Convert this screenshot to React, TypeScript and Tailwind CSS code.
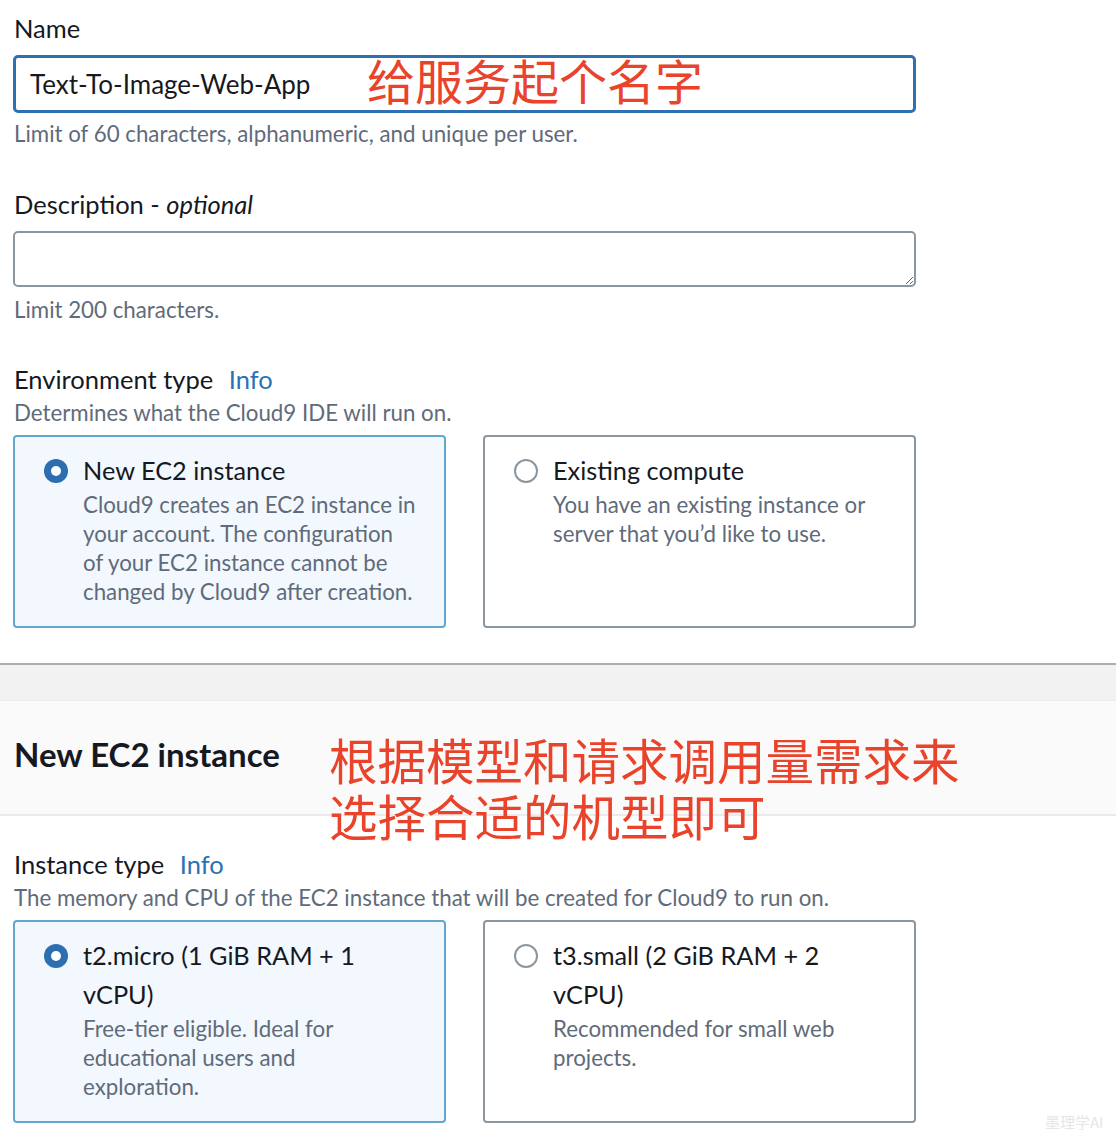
import React from "react";

const Radio = ({ checked }: { checked: boolean }) =>
  checked ? (
    <span className="block w-[24px] h-[24px] rounded-full bg-[#2d6eb0] flex items-center justify-center shrink-0">
      <span className="block w-[10px] h-[10px] rounded-full bg-white" />
    </span>
  ) : (
    <span className="block w-[24px] h-[24px] rounded-full border-2 border-[#8c969f] bg-white shrink-0" />
  );

const Card = ({
  checked,
  title,
  desc,
}: {
  checked: boolean;
  title: string[];
  desc: string[];
}) => (
  <div
    className={
      checked
        ? "border-2 border-[#63a7cf] bg-[#f2f8fd] rounded-[4px] pl-[29px] pr-[20px] pt-[14px] pb-[20px]"
        : "border-2 border-[#8c969f] bg-white rounded-[4px] pl-[29px] pr-[20px] pt-[14px] pb-[20px]"
    }
  >
    <div className="flex items-start">
      <div className="h-[39px] flex items-center">
        <Radio checked={checked} />
      </div>
      <div className="ml-[15px]">
        {title.map((t, i) => (
          <div key={i} className="text-[25.3px] leading-[39px] text-[#16191f] whitespace-nowrap">
            {t}
          </div>
        ))}
        {desc.map((d, i) => (
          <div key={i} className="text-[22.3px] leading-[29px] text-[#5f6b7a] whitespace-nowrap">
            {d}
          </div>
        ))}
      </div>
    </div>
  </div>
);

export default function App() {
  return (
    <div className="relative w-[1116px] h-[1140px] overflow-hidden bg-white font-['Lato','Noto_Sans_CJK_SC',sans-serif]">
      {/* Section 1 */}
      <div className="ml-[13px] w-[903px] pt-[13px]">
        <div className="text-[25.5px] leading-[30px] text-[#16191f] pl-[1px]">Name</div>
        <div className="mt-[12px] h-[58px] border-[3px] border-[#2f70b2] rounded-[5px] flex items-center pl-[14px]">
          <span className="text-[26px] text-[#16191f]">Text-To-Image-Web-App</span>
        </div>
        <div className="mt-[7px] text-[22.3px] leading-[28px] text-[#5f6b7a] pl-[1px]">
          Limit of 60 characters, alphanumeric, and unique per user.
        </div>

        <div className="mt-[41px] text-[25.5px] leading-[30px] text-[#16191f] pl-[1px]">
          Description - <span className="italic">optional</span>
        </div>
        <textarea
          readOnly
          className="mt-[12px] block w-full h-[56px] border-2 border-[#8c969f] rounded-[5px] bg-white outline-none"
        />
        <div className="mt-[9px] text-[22.3px] leading-[28px] text-[#5f6b7a] pl-[1px]">
          Limit 200 characters.
        </div>

        <div className="mt-[40px] text-[25.5px] leading-[30px] text-[#16191f] pl-[1px]">
          Environment type <span className="ml-[9px] text-[#2a71b5]">Info</span>
        </div>
        <div className="mt-[5px] text-[22.3px] leading-[28px] text-[#5f6b7a] pl-[1px]">
          Determines what the Cloud9 IDE will run on.
        </div>
        <div className="mt-[8px] grid grid-cols-2 gap-[37px] h-[193px]">
          <Card
            checked
            title={["New EC2 instance"]}
            desc={[
              "Cloud9 creates an EC2 instance in",
              "your account. The configuration",
              "of your EC2 instance cannot be",
              "changed by Cloud9 after creation.",
            ]}
          />
          <Card
            checked={false}
            title={["Existing compute"]}
            desc={["You have an existing instance or", "server that you\u2019d like to use."]}
          />
        </div>
      </div>

      {/* Divider band */}
      <div className="mt-[35px] border-t-2 border-[#a9aeb3] h-[37px] bg-[#f2f2f2]" />
      <div className="h-[116px] bg-[#fafafa] border-t border-b-2 border-[#ebebeb] flex items-center pl-[14px] pb-[6px]">
        <span className="text-[33px] font-bold text-[#16191f]">New EC2 instance</span>
      </div>

      {/* Section 2 */}
      <div className="ml-[13px] w-[903px] pt-[33px]">
        <div className="text-[25.5px] leading-[30px] text-[#16191f] pl-[1px]">
          Instance type <span className="ml-[9px] text-[#2a71b5]">Info</span>
        </div>
        <div className="mt-[5px] text-[22.3px] leading-[28px] text-[#5f6b7a] pl-[1px]">
          The memory and CPU of the EC2 instance that will be created for Cloud9 to run on.
        </div>
        <div className="mt-[8px] grid grid-cols-2 gap-[37px] h-[202px]">
          <Card
            checked
            title={["t2.micro (1 GiB RAM + 1", "vCPU)"]}
            desc={["Free-tier eligible. Ideal for", "educational users and", "exploration."]}
          />
          <Card
            checked={false}
            title={["t3.small (2 GiB RAM + 2", "vCPU)"]}
            desc={["Recommended for small web", "projects."]}
          />
        </div>
      </div>

      {/* Annotations */}
      <div className="absolute left-[367px] top-[51px] text-[48px] leading-[56px] text-[#e9432b] font-['Noto_Sans_CJK_SC',sans-serif] whitespace-nowrap">
        给服务起个名字
      </div>
      <div className="absolute left-[329px] top-[731px] text-[48.5px] leading-[56px] text-[#e9432b] font-['Noto_Sans_CJK_SC',sans-serif] whitespace-nowrap">
        <div>根据模型和请求调用量需求来</div>
        <div>选择合适的机型即可</div>
      </div>
      <div className="absolute left-[1045px] top-[1112px] text-[15px] leading-[20px] text-[#e6e6e6] font-['Noto_Sans_CJK_SC',sans-serif] whitespace-nowrap">
        墨理学AI
      </div>
    </div>
  );
}
